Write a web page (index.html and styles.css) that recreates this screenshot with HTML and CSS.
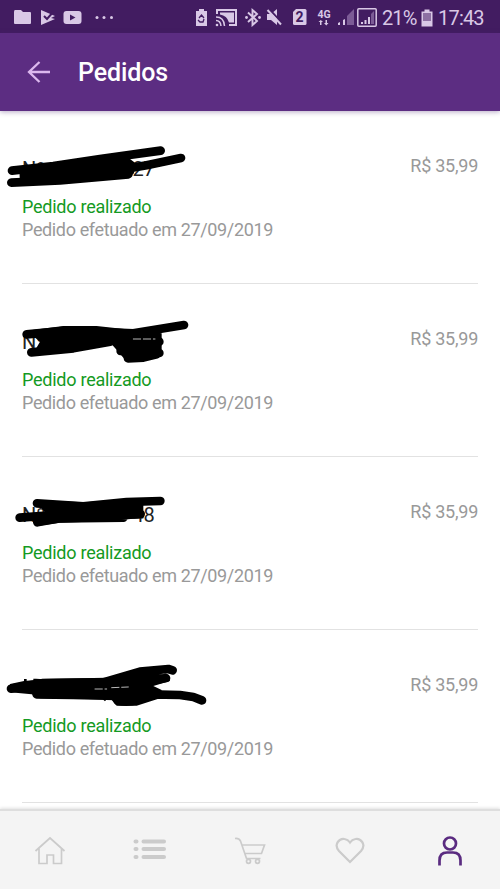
FILE: index.html
```html
<!DOCTYPE html>
<html lang="pt-BR">
<head>
<meta charset="utf-8">
<title>Pedidos</title>
<link rel="stylesheet" href="styles.css">
</head>
<body>
<div class="screen">
  <div class="status-bar">
    <svg class="st-left" width="106" height="18" viewBox="0 0 106 18">
      <path d="M0 4q0-2 1-2h6l2 2h7q1 0 1 1v10q0 1-1 1H1q-1 0-1-1z"/>
      <path d="M27 2l14 6-4 2 4 1-14 6z"/><path class="cut" d="M30 8l3 3 7-8"/>
      <rect x="49.500" y="3" width="18" height="13" rx="3"/><path class="hole" d="M56 6.500v6l5.500-3z"/>
      <circle cx="83" cy="9.500" r="1.500"/><circle cx="90" cy="9.500" r="1.500"/><circle cx="97.500" cy="9.500" r="1.500"/>
    </svg>
    <svg class="st-right" width="182" height="20" viewBox="195 7 182 20">
      <path d="M196 11h3V9h5v2h3v15h-11z"/>
      <path class="thin-cut" d="M199 18l2.500-3 2.500 3M204 19l-1 3h-3l-2-2"/>
      <path class="line" d="M217 14V10h19v15h-7"/><path d="M220 12.500h14v10h-5q-2-7-9-8z"/>
      <path class="line thin" d="M216 17q8 0 8.500 9M216 20.500q4.500 0 5 5.500"/><circle cx="217" cy="25" r="1.300"/>
      <path class="line bt" d="M248 12.500l9 8.500-4.500 4V10l4.500 4-9 8"/><circle cx="246.500" cy="17.500" r="1.400"/><circle cx="259.500" cy="17.500" r="1.400"/>
      <path d="M267 14h4l6-5v16l-6-5h-4z"/><path class="cut" d="M269 9l14 15"/><path class="line" d="M267.500 10l13.500 14.500"/>
      <path d="M293 12l3-3h9q1.500 0 1.500 1.500v13q0 1.500-1.500 1.500h-10.500q-1.500 0-1.500-1.500z"/><text class="sim" x="295.500" y="22">2</text>
      <text class="net" x="317.500" y="17.500">4G</text>
      <path d="M320 25v-3h-1.500l2.300-2 2.200 2h-1.500v3zM325.500 20v3H324l2.300 2.500 2.200-2.500H327v-3z"/>
      <path d="M338 25v-2l2-1v3zM343 25v-5l2-1v6z"/><path class="dim" d="M347 25v-9l7-7v16z"/>
      <rect class="line thin" x="357.800" y="8.800" width="18.400" height="17.400" rx="1"/>
      <path d="M361 24v-2h2v2zM364.500 24v-4h2v4zM368 24v-7h2v7z"/><path class="dim" d="M371 24V14l3-3v13z"/>
    </svg>
    <span class="percent">21%</span>
    <svg class="battery" width="12" height="18" viewBox="0 0 12 18"><path d="M0.500 2.500H3.500V0.500h5v2h3v15H0.500z"/><path class="charge" d="M2 4h8v8H2z"/></svg>
    <span class="time">17:43</span>
  </div>

  <header class="app-bar">
    <svg class="back" width="24" height="24" viewBox="0 0 24 24"><path d="M12.500 2L2 12l10.500 10M2 12h21"/></svg>
    <h1>Pedidos</h1>
  </header>

  <main class="orders">
    <article class="order">
      <div class="number"><span>Nº</span><span class="tail">27</span></div>
      <div class="state">Pedido realizado</div>
      <div class="date">Pedido efetuado em 27/09/2019</div>
      <div class="price">R$ 35,99</div>
      <svg class="scribble" width="220" height="60" viewBox="0 0 660 180"><path class="blob" d="M58 85L250 60 370 42 405 68 402 100 388 112 60 136z"/><path d="M36 92L160 78 300 57 482 32M34 128L180 121 385 103M370 88L440 76 543 54"/></svg>
    </article>
    <article class="order">
      <div class="number"><span>Nº</span></div>
      <div class="state">Pedido realizado</div>
      <div class="date">Pedido efetuado em 27/09/2019</div>
      <div class="price">R$ 35,99</div>
      <svg class="scribble" width="220" height="60" viewBox="0 9 660 180"><path class="blob" d="M80 62L190 48 290 48 400 60 485 70V85L485 135 450 145 380 155 355 125 335 103 220 125 95 138 120 95z"/><path d="M80 73L200 62 400 70 552 45M94 127L220 115 330 95M350 96L478 95M362 123L478 129M384 145L430 143 470 133"/><path class="gap" d="M400 87h65"/></svg>
    </article>
    <article class="order">
      <div class="number"><span>Nº</span><span class="tail">48</span></div>
      <div class="state">Pedido realizado</div>
      <div class="date">Pedido efetuado em 27/09/2019</div>
      <div class="price">R$ 35,99</div>
      <svg class="scribble" width="220" height="60" viewBox="0 3 660 180"><path class="blob" d="M105 45L250 52 430 42 430 98 330 108 180 113 110 123 137 85z"/><path d="M111 55L250 64 380 51 481 48M59 98L140 92 300 94 422 87M112 112L180 100 370 98"/></svg>
    </article>
    <article class="order">
      <div class="number"></div>
      <div class="state">Pedido realizado</div>
      <div class="date">Pedido efetuado em 27/09/2019</div>
      <div class="price">R$ 35,99</div>
      <svg class="scribble" width="220" height="60" viewBox="0 12 660 180"><path class="blob" d="M30 87L72 78 72 72 80 72 80 77 100 76 100 71 108 71 120 72 320 68 410 50 505 60 510 78 460 93 485 105 480 130 410 152 350 152 335 135 320 133 315 139 308 133 120 130 95 118 30 112z"/><path d="M33 101L80 92 130 84 310 82 420 50 505 42 518 46M110 118L220 120 350 123 430 120M400 88L498 69M353 137Q400 148 450 118L540 120 580 126 606 136"/><path class="gap" d="M285 102h35M335 98l50-2"/></svg>
    </article>
  </main>

  <nav class="tabs">
    <a class="tab"><svg width="32" height="30" viewBox="0 0 32 30"><path d="M1.500 15L16 2l14.500 13M5 12v15.500h8v-8.500h6.500v8.500h8V12"/></svg></a>
    <a class="tab"><svg class="list" width="34" height="30" viewBox="0 0 34 30"><path d="M2.500 5.500H3.500M2.500 13H3.500M2.500 21H3.500M10.500 5.500h20.500M10.500 13h20.500M10.500 21h20.500"/></svg></a>
    <a class="tab"><svg class="cart" width="32" height="30" viewBox="0 0 32 30"><path d="M1 2.500q4-0.500 5.500 2.500l6 17.500h14M8 9h22.500l-3 8.500H11"/><circle cx="14.500" cy="25.300" r="2"/><circle cx="23.500" cy="25.300" r="2"/></svg></a>
    <a class="tab"><svg class="heart" width="32" height="30" viewBox="0 0 32 30"><path d="M16 26L5 15C-1 8 6 2 10.500 3Q14 3.500 16 6.500 18 3.500 21.500 3C26 2 33 8 27 15z"/></svg></a>
    <a class="tab active"><svg width="32" height="32" viewBox="0 0 32 32"><circle cx="16" cy="8.500" r="6"/><path d="M5.500 30.500v-5q0-8 7.500-8h6q7.500 0 7.500 8v5"/></svg></a>
  </nav>
</div>
</body>
</html>
```
FILE: styles.css
```css
* { box-sizing: border-box; }
body { margin: 0; background: #fff; font-family: Roboto, "Liberation Sans", sans-serif; }
.screen { width: 500px; height: 889px; display: flex; flex-direction: column; overflow: hidden; }

.status-bar { height: 33px; flex: none; display: flex; align-items: flex-start; background: #421c61; color: #d9c8e6; font-size: 20px; line-height: 36px; }
.status-bar svg { fill: #d9c8e6; flex: none; }
.st-left { margin: 8px 0 0 14px; }
.st-right { margin: 7px 0 0 75px; }
.status-bar .line { fill: none; stroke: #d9c8e6; stroke-width: 2; }
.status-bar .thin { stroke-width: 1.500; }
.status-bar .bt { stroke-width: 1.900; }
.status-bar .cut { fill: none; stroke: #421c61; stroke-width: 2; }
.status-bar .thin-cut { fill: none; stroke: #421c61; stroke-width: 1.300; }
.status-bar .hole { fill: #421c61; }
.status-bar .dim { fill: #7c5b96; }
.status-bar .sim { font-size: 14px; font-weight: 700; fill: #421c61; }
.net { font-size: 10.500px; font-weight: 700; }
.percent { width: 39px; margin-left: 5px; white-space: nowrap; letter-spacing: -0.900px; }
.battery { margin-top: 9px; }
.battery .charge { fill: #8d70a3; }
.time { margin-left: 5px; letter-spacing: -0.800px; white-space: nowrap; }

.app-bar { height: 78px; flex: none; display: flex; align-items: center; padding-top: 2px; background: #5c2d82; box-shadow: 0 1px 5px rgba(70, 40, 110, .4); position: relative; z-index: 1; }
.back { margin: 0 0 2px 27px; fill: none; stroke: #dcb8ee; stroke-width: 2.300; }
.app-bar h1 { margin: 0 0 0 27px; color: #fff; font-size: 25px; font-weight: 500; line-height: 30px; letter-spacing: -0.100px; }

.orders { flex: 1; min-height: 0; padding: 0 22px; overflow: hidden; }
.order { height: 173px; display: grid; grid-template-columns: 1fr auto; grid-template-rows: 41px 24px 24px; padding-top: 42px; border-bottom: 1.500px solid #e2e2e2; position: relative; white-space: nowrap; }
.number { grid-area: 1 / 1; display: flex; font-size: 20px; line-height: 32px; color: #222; }
.tail { margin-left: 87px; }
.state { grid-area: 2 / 1; font-size: 18px; line-height: 26px; letter-spacing: -0.250px; color: #149a23; }
.date { grid-area: 3 / 1; font-size: 18px; line-height: 24px; letter-spacing: -0.360px; color: #999; }
.price { grid-area: 1 / 2; font-size: 18px; line-height: 26px; letter-spacing: -0.250px; color: #999; }
.scribble { position: absolute; left: -22px; top: 29px; fill: none; stroke: #000; stroke-width: 26; stroke-linecap: round; stroke-linejoin: round; }
.scribble .blob { fill: #000; stroke: none; }
.scribble .gap { stroke: #ddd; stroke-width: 2.500; stroke-dasharray: 22 8; }

.tabs { height: 80px; flex: none; display: flex; background: #f4f4f4; border-top: 2px solid #dedede; box-shadow: 0 -1px 3px rgba(0, 0, 0, .12); position: relative; }
.tab { flex: 1; display: flex; align-items: center; justify-content: center; padding-top: 1px; }
.tab svg { fill: none; stroke: #cbcbcb; stroke-width: 1.700; }
.tab .list { stroke-width: 4; stroke-linecap: round; }
.tab .heart { stroke-width: 2.200; }
.tab.active svg { stroke: #5a2b80; stroke-width: 2.700; }
```
